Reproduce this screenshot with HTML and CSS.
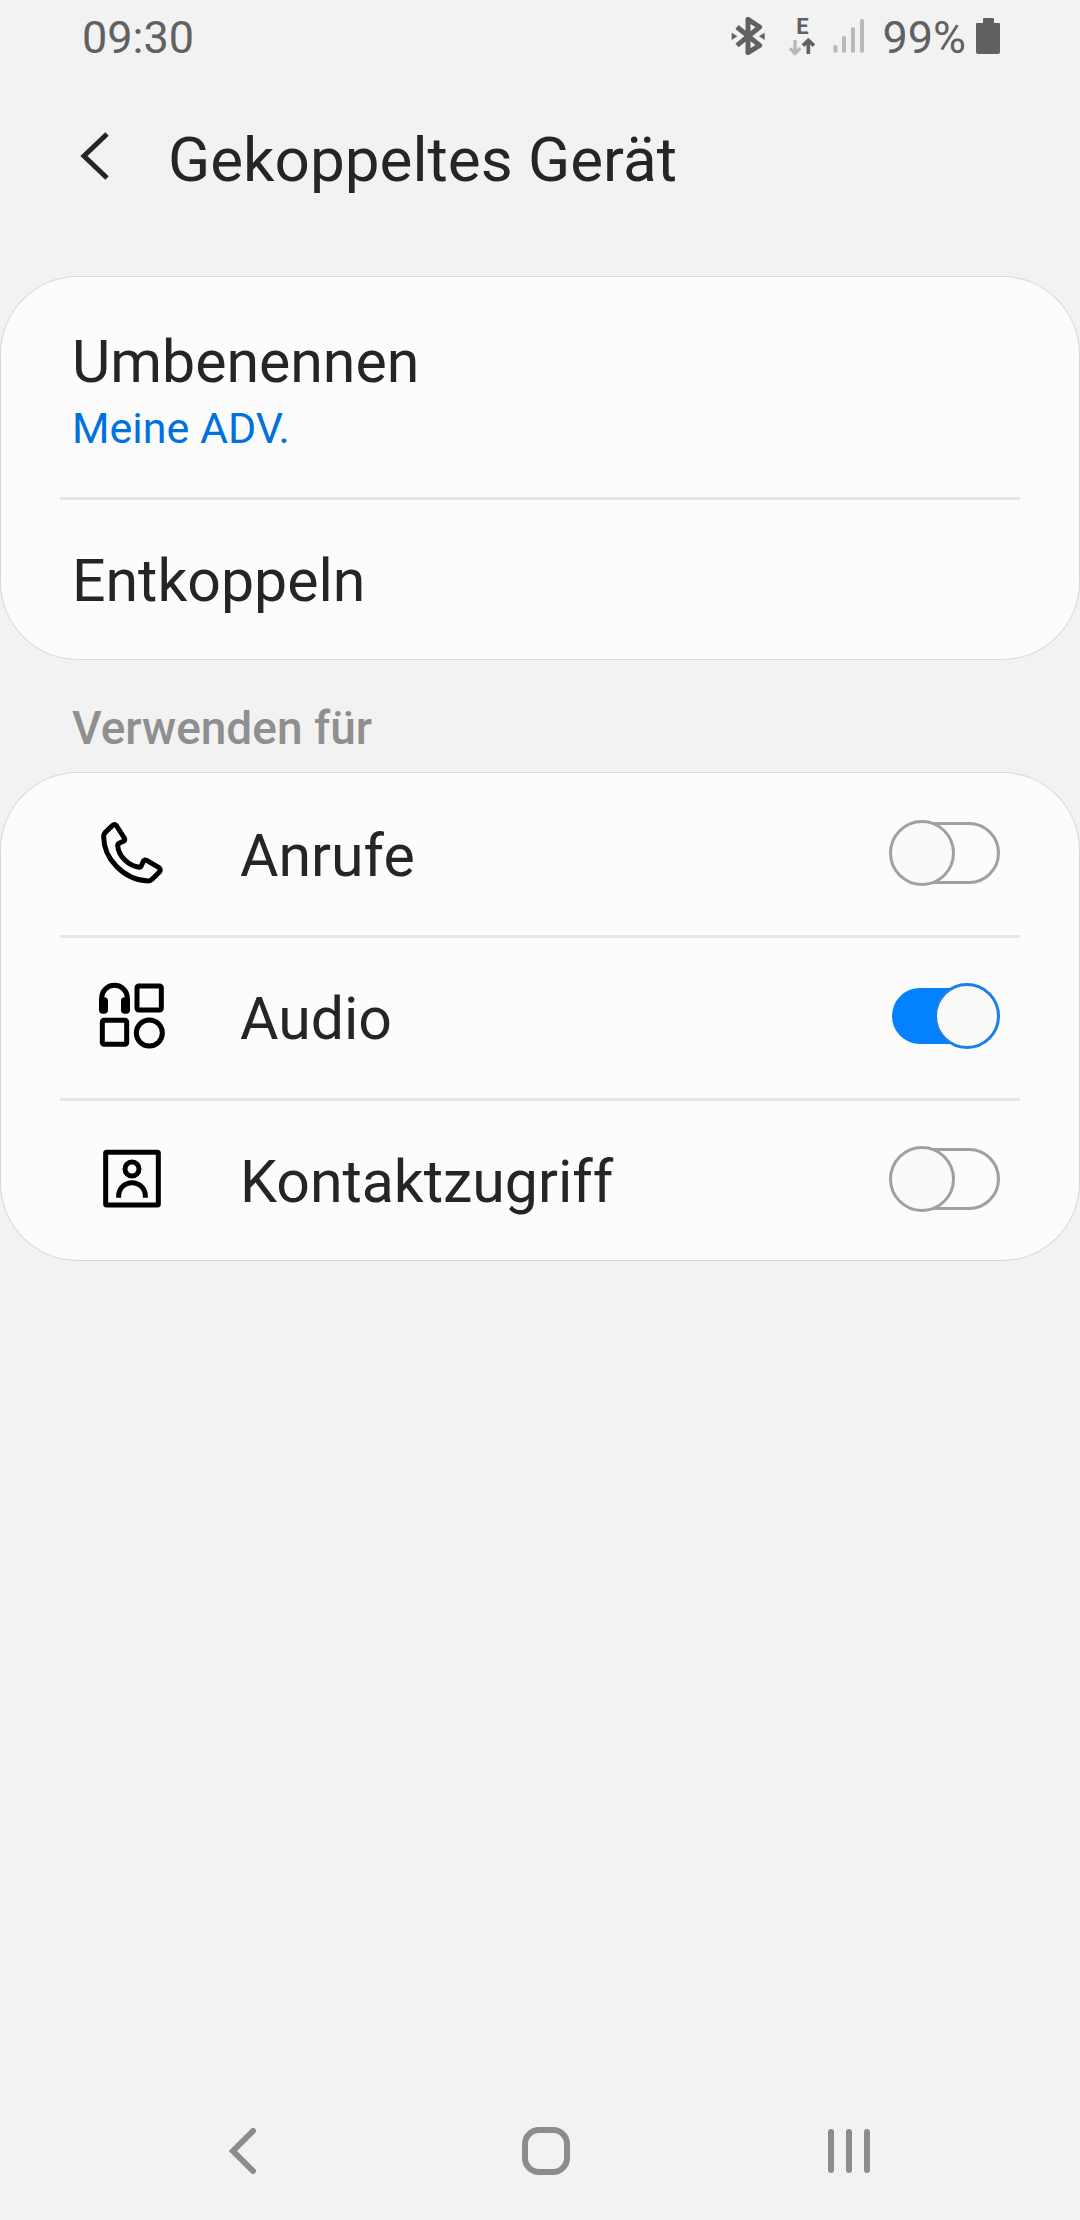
FILE: index.html
```html
<!DOCTYPE html>
<html lang="de">

<head>
    <meta charset="UTF-8">
    <meta name="viewport" content="width=device-width, initial-scale=1.0">
    <title>Gekoppeltes Gerät</title>
    <link rel="stylesheet" href="styles.css">
</head>

<body>
    <div class="status-bar">
        <span class="status-text">09:30</span>
        <div class="status-icons">
            <svg class="bluetooth" width="34" height="38" viewBox="91 51 102 114" aria-hidden="true">
                <path d="M109 81 L177 136 L142 158 V58 L177 81 L109 136" fill="none" stroke="#616161" stroke-width="15" stroke-linejoin="round" />
                <path d="M93 98 L110 109 L93 120z M192 98 L175 109 L192 120z" fill="#616161" />
            </svg>
            <div class="network">
                <span>E</span>
                <svg width="26" height="18" viewBox="263 117 78 54" aria-hidden="true">
                    <path d="M281 123 V162 M266 148 L281 163 L297 148" fill="none" stroke="#b9b9b9" stroke-width="10" />
                    <path d="M321 165 V126 M305 140 L321 124 L338 140" fill="none" stroke="#616161" stroke-width="11" />
                </svg>
            </div>
            <svg width="31" height="34" viewBox="391 60 93 102" fill="#b9b9b9" aria-hidden="true">
                <rect x="392" y="138" width="12" height="23" rx="5" />
                <rect x="418" y="111" width="12" height="50" rx="5" />
                <rect x="445" y="85" width="12" height="76" rx="5" />
                <rect x="472" y="60" width="12" height="101" rx="5" />
            </svg>
            <div class="battery">
                <span class="status-text">99%</span>
                <svg width="24" height="36" viewBox="0 0 24 36" fill="#616161" aria-hidden="true">
                    <path d="M8 0h9a1 1 0 0 1 1 1v4h5a1 1 0 0 1 1 1v28a2 2 0 0 1-2 2H2a2 2 0 0 1-2-2V6a1 1 0 0 1 1-1h6V1a1 1 0 0 1 1-1z" />
                </svg>
            </div>
        </div>
    </div>

    <header class="header">
        <button class="back" type="button" aria-label="Zurück">
            <svg width="30" height="48" viewBox="0 0 30 48" aria-hidden="true">
                <path d="M27 2 L4 24 L27 46" fill="none" stroke="#252525" stroke-width="5" />
            </svg>
        </button>
        <h1>Gekoppeltes Gerät</h1>
    </header>

    <main class="content">
        <div class="card">
            <button class="row row-double" type="button">
                <span class="label">Umbenennen</span>
                <span class="summary">Meine ADV.</span>
            </button>
            <button class="row" type="button">
                <span class="label">Entkoppeln</span>
            </button>
        </div>

        <h2 class="section-title">Verwenden für</h2>

        <div class="card">
            <div class="row">
                <div class="icon">
                    <svg width="72" height="72" viewBox="108 381 216 216" aria-hidden="true">
                        <path d="M134 430 Q136 427 157 407 Q164 401 170 408 L193 444 Q196 450 190 454 L177 460 Q173 462 173 466 C175 498 205 528 238 532 Q242 532 244 527 L249 516 Q252 508 260 511 L297 533 Q304 539 298 546 L277 567 Q271 573 264 573 C190 570 131 505 131 440 Q131 434 134 430z" fill="none" stroke="#000" stroke-width="15" stroke-linejoin="round" />
                    </svg>
                </div>
                <label class="label" for="calls">Anrufe</label>
                <input class="switch" type="checkbox" id="calls">
            </div>
            <div class="row">
                <div class="icon">
                    <svg width="72" height="72" viewBox="48 61 216 216" aria-hidden="true">
                        <g fill="none" stroke="#000" stroke-width="15">
                            <path d="M65 130 V115 a38 38 0 0 1 77 0 V130" />
                            <rect x="171" y="79" width="73" height="72" rx="5" />
                            <rect x="67" y="182" width="73" height="72" rx="5" />
                            <circle cx="208" cy="220" r="39" />
                        </g>
                        <rect x="57" y="113" width="27" height="49" rx="11" />
                        <rect x="123" y="113" width="27" height="49" rx="11" />
                    </svg>
                </div>
                <label class="label" for="audio">Audio</label>
                <input class="switch" type="checkbox" id="audio" checked>
            </div>
            <div class="row">
                <div class="icon">
                    <svg width="72" height="72" viewBox="48 550 216 216" fill="none" stroke="#000" stroke-width="15" aria-hidden="true">
                        <rect x="77" y="578" width="158" height="158" rx="3" />
                        <circle cx="156" cy="628" r="21" />
                        <path d="M116 714 V709 a40 40 0 0 1 80 0 V714" />
                    </svg>
                </div>
                <label class="label" for="contacts">Kontaktzugriff</label>
                <input class="switch" type="checkbox" id="contacts">
            </div>
        </div>
    </main>

    <nav class="nav-bar">
        <button type="button" aria-label="Zurück">
            <svg width="28" height="46" viewBox="0 0 28 46" aria-hidden="true">
                <path d="M24 3 L4 23 L24 43" fill="none" stroke="#8c8c8c" stroke-width="6" stroke-linecap="round" />
            </svg>
        </button>
        <button type="button" aria-label="Startseite">
            <svg width="48" height="48" viewBox="0 0 48 48" aria-hidden="true">
                <rect x="3" y="3" width="42" height="42" rx="14" fill="none" stroke="#8c8c8c" stroke-width="6" />
            </svg>
        </button>
        <button type="button" aria-label="Letzte Apps">
            <svg width="42" height="46" viewBox="0 0 42 46" fill="#8c8c8c" aria-hidden="true">
                <rect x="0" y="1" width="6" height="44" rx="3" />
                <rect x="18" y="1" width="6" height="44" rx="3" />
                <rect x="36" y="1" width="6" height="44" rx="3" />
            </svg>
        </button>
    </nav>
</body>

</html>
```

FILE: styles.css
```css
* {
    box-sizing: border-box;
}

body {
    display: flex;
    flex-direction: column;
    min-height: 100vh;
    margin: 0;
    background-color: #f2f2f2;
    color: #252525;
    font-family: Roboto, "Liberation Sans", sans-serif;
}

svg {
    display: block;
}

button {
    margin: 0;
    padding: 0;
    border: 0;
    background: none;
    color: inherit;
    font: inherit;
    text-align: left;
}

/* status bar */
.status-bar {
    display: flex;
    align-items: center;
    justify-content: space-between;
    height: 72px;
    padding: 0 80px 0 82px;
    color: #616161;
}

.status-icons {
    display: flex;
    align-items: center;
    gap: 18px;
}

.status-text {
    padding-top: 3px;
    font-size: 45px;
    line-height: 52px;
}

.bluetooth {
    margin-right: 6px;
}

.network {
    display: flex;
    flex-direction: column;
    align-items: center;
    font-size: 22px;
    font-weight: 700;
    line-height: 22px;
}

.battery {
    display: flex;
    align-items: center;
    gap: 10px;
}

/* header */
.header {
    display: flex;
    align-items: center;
    height: 168px;
    padding: 0 80px;
}

.back {
    width: 88px;
}

h1 {
    margin: 0;
    padding-top: 8px;
    font-size: 62px;
    font-weight: 400;
    line-height: 74px;
}

/* lists */
.content {
    flex: 1;
    padding-top: 36px;
}

.card {
    border-radius: 78px;
    background-color: #fcfcfc;
    box-shadow: inset 0 0 0 1px #d6d6d6;
    padding: 0 60px;
}

.row {
    display: flex;
    align-items: center;
    width: 100%;
    min-height: 163px;
    padding: 0 20px 4px 12px;
    border-top: 3px solid #e6e6e6;
}

.row:first-child {
    border-top-color: transparent;
}

.row-double {
    flex-direction: column;
    align-items: flex-start;
    padding-top: 42px;
    padding-bottom: 44px;
}

.label {
    flex: 1;
    padding-top: 6px;
    font-size: 59px;
    line-height: 70px;
}

.summary {
    margin-top: 6px;
    color: #0072de;
    font-size: 43px;
    line-height: 50px;
}

.section-title {
    margin: 0;
    padding: 42px 72px 18px;
    color: #8f8f8f;
    font-size: 46px;
    font-weight: 500;
    line-height: 52px;
}

.icon {
    display: flex;
    justify-content: center;
    width: 120px;
    margin-right: 48px;
}

/* switch: track and knob share one grid cell */
.switch {
    appearance: none;
    display: grid;
    align-items: center;
    width: 111px;
    height: 66px;
    margin: 0;
}

.switch::before,
.switch::after {
    content: "";
    grid-area: 1 / 1;
    box-sizing: border-box;
    border: 3px solid #a0a0a0;
    border-radius: 33px;
}

.switch::before {
    height: 62px;
    margin-left: 3px;
}

.switch::after {
    width: 66px;
    height: 66px;
    background-color: #fafafa;
}

.switch:checked::before {
    height: 56px;
    margin-right: 3px;
    border-color: #0381fe;
    background-color: #0381fe;
}

.switch:checked::after {
    justify-self: end;
    border-color: #1a7fe8;
}

/* navigation bar */
.nav-bar {
    display: flex;
    height: 138px;
    padding: 0 80px 0 92px;
}

.nav-bar button {
    display: flex;
    flex: 1;
    align-items: center;
    justify-content: center;
}
```
